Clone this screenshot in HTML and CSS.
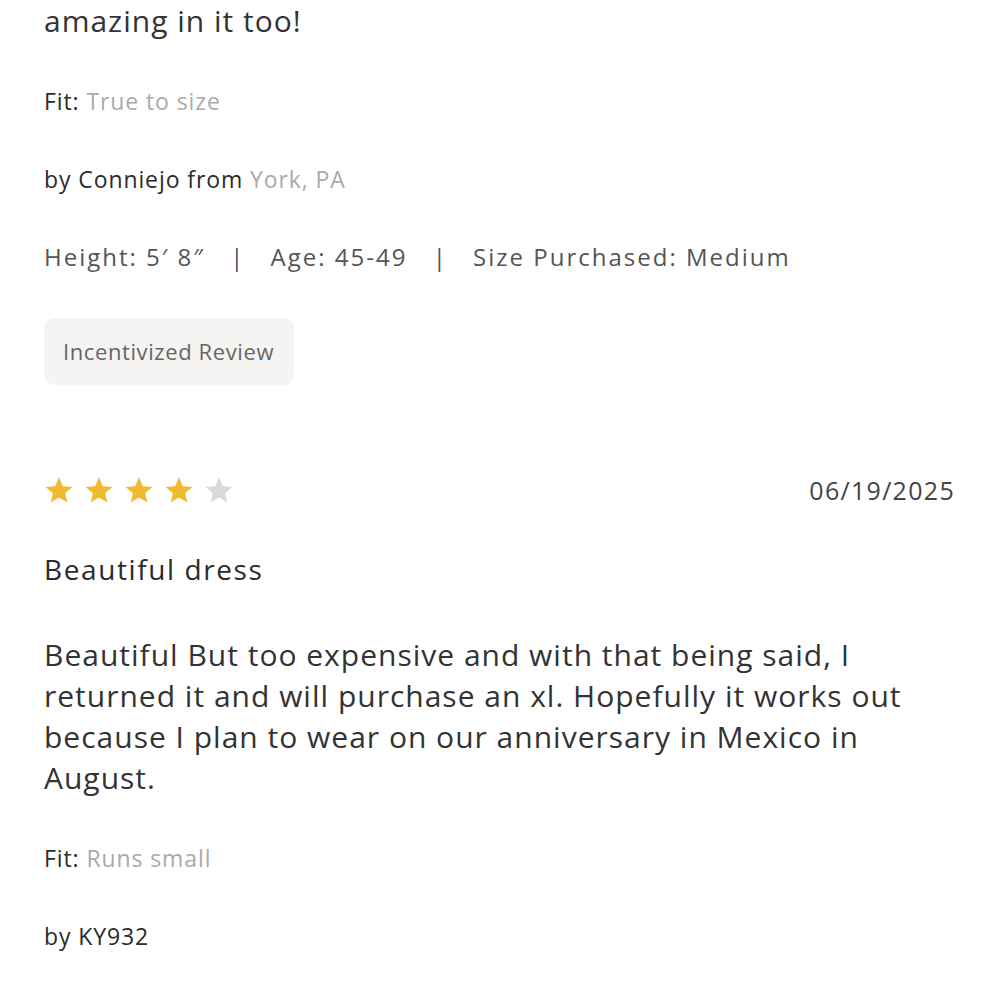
FILE: index.html
```html
<!DOCTYPE html>
<html lang="en">
<head>
    <meta charset="UTF-8">
    <meta name="viewport" content="width=device-width, initial-scale=1.0">
    <title>Reviews</title>
    <link rel="stylesheet" href="styles.css">
</head>
<body>
    <div class="review">
        <p class="review-body">amazing in it too!</p>
        <div class="line fit">Fit: <span class="muted">True to size</span></div>
        <div class="line author">by Conniejo from <span class="muted">York, PA</span></div>
        <div class="line meta">Height: 5&#8242; 8&#8243; <span class="sep">|</span> Age: 45-49 <span class="sep">|</span> Size Purchased: Medium</div>
        <div class="badge">Incentivized Review</div>
    </div>

    <div class="review next">
        <div class="review-head">
            <div class="stars">
                <svg class="star on" viewBox="0 0 24 24"><path d="M12 1.8l3.1 7.1 7.6.6-5.8 5 1.8 7.5L12 18l-6.7 4 1.8-7.5-5.8-5 7.6-.6z"/></svg>
                <svg class="star on" viewBox="0 0 24 24"><path d="M12 1.8l3.1 7.1 7.6.6-5.8 5 1.8 7.5L12 18l-6.7 4 1.8-7.5-5.8-5 7.6-.6z"/></svg>
                <svg class="star on" viewBox="0 0 24 24"><path d="M12 1.8l3.1 7.1 7.6.6-5.8 5 1.8 7.5L12 18l-6.7 4 1.8-7.5-5.8-5 7.6-.6z"/></svg>
                <svg class="star on" viewBox="0 0 24 24"><path d="M12 1.8l3.1 7.1 7.6.6-5.8 5 1.8 7.5L12 18l-6.7 4 1.8-7.5-5.8-5 7.6-.6z"/></svg>
                <svg class="star" viewBox="0 0 24 24"><path d="M12 1.8l3.1 7.1 7.6.6-5.8 5 1.8 7.5L12 18l-6.7 4 1.8-7.5-5.8-5 7.6-.6z"/></svg>
            </div>
            <div class="date">06/19/2025</div>
        </div>
        <h3 class="review-title">Beautiful dress</h3>
        <p class="review-body">Beautiful But too expensive and with that being said, I returned it and will purchase an xl. Hopefully it works out because I plan to wear on our anniversary in Mexico in August.</p>
        <div class="line fit">Fit: <span class="muted">Runs small</span></div>
        <div class="line author">by KY932</div>
    </div>
</body>
</html>
```

FILE: styles.css
```css
body {
    font-family: "Open Sans", Lato, sans-serif;
    margin: 0;
    padding: 0 45px 0 44px;
    background: #fff;
    color: #2b2b2b;
}
.review-body {
    margin: 0;
    font-size: 30px;
    line-height: 41px;
    letter-spacing: 1px;
    color: #333;
}
.line {
    font-size: 23px;
    line-height: 30px;
    margin-top: 48px;
    letter-spacing: 0.9px;
    color: #2b2b2b;
}
.muted {
    color: #aaa;
}
.meta {
    font-size: 24px;
    color: #555;
    letter-spacing: 2px;
}
.sep {
    margin: 0 17px;
}
.badge {
    display: inline-block;
    margin-top: 46px;
    padding: 0 20px 0 19px;
    height: 67px;
    line-height: 67px;
    font-size: 22px;
    letter-spacing: 0.6px;
    color: #666;
    background: #f5f4f2;
    border-radius: 10px;
}
.next {
    margin-top: 90px;
}
.review-head {
    display: flex;
    justify-content: space-between;
    align-items: center;
    height: 30px;
}
.stars {
    display: flex;
    gap: 10px;
}
.star {
    width: 30px;
    height: 30px;
    fill: #d9d9d9;
}
.star.on {
    fill: #efbb2e;
}
.date {
    font-size: 25px;
    color: #444;
    letter-spacing: 1.3px;
}
.review-title {
    margin: 49px 0 0;
    font-size: 28px;
    line-height: 30px;
    font-weight: normal;
    letter-spacing: 1.6px;
    color: #2b2b2b;
}
.review-title + .review-body {
    margin-top: 50px;
}
.review-body + .fit {
    margin-top: 45px;
}
```
